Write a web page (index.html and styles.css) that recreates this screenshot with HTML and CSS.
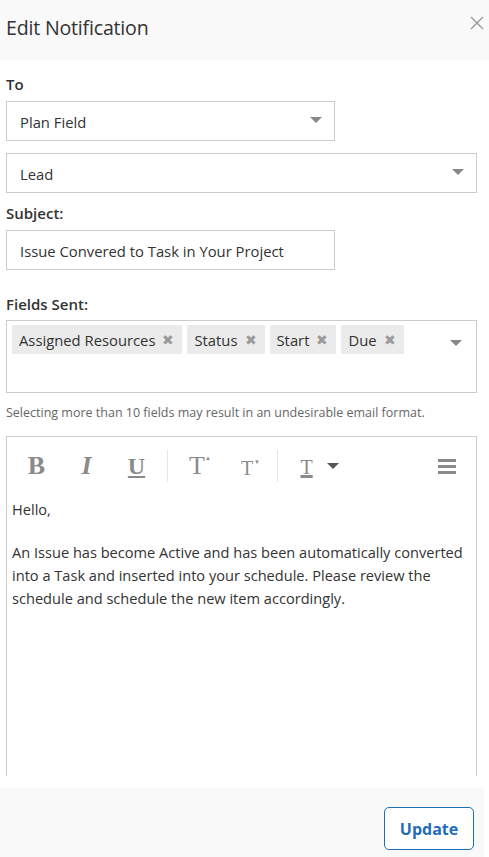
FILE: index.html
```html
<!DOCTYPE html>
<html>
<head>
<meta charset="utf-8">
<link rel="stylesheet" href="styles.css">
</head>
<body>
<div class="dialog">
  <div class="header">
    <h1 class="title">Edit Notification</h1>
    <svg class="close" width="14" height="14" viewBox="0 0 14 14"><path d="M1 1L13 13M13 1L1 13" stroke="#999" stroke-width="1.4" fill="none"/></svg>
  </div>
  <div class="body">
    <div class="label label-to">To</div>
    <div class="select short"><span>Plan Field</span><i class="caret"></i></div>
    <div class="select full"><span>Lead</span><i class="caret"></i></div>
    <div class="label label-subject">Subject:</div>
    <div class="input short">Issue Convered to Task in Your Project</div>
    <div class="label label-fields">Fields Sent:</div>
    <div class="multi">
      <div class="tags">
        <span class="tag">Assigned Resources <b class="x">✖</b></span>
        <span class="tag">Status <b class="x">✖</b></span>
        <span class="tag">Start <b class="x">✖</b></span>
        <span class="tag">Due <b class="x">✖</b></span>
      </div>
      <i class="caret"></i>
    </div>
    <div class="hint">Selecting more than 10 fields may result in an undesirable email format.</div>
    <div class="editor">
      <div class="toolbar">
        <span class="tb tb-b">B</span>
        <span class="tb tb-i">I</span>
        <span class="tb tb-u">U</span>
        <span class="sep"></span>
        <span class="tb tb-t">T<small>&#9650;</small></span>
        <span class="tb tb-t2">T<small>&#9660;</small></span>
        <span class="sep"></span>
        <span class="tb-color">T</span><i class="caret dark"></i>
        <span class="spacer"></span>
        <span class="menu"><i></i><i></i><i></i></span>
      </div>
      <div class="content">
        <p>Hello,</p>
        <p>An Issue has become Active and has been automatically converted into a Task and inserted into your schedule. Please review the schedule and schedule the new item accordingly.</p>
      </div>
    </div>
  </div>
  <div class="footer">
    <button class="btn">Update</button>
  </div>
</div>
</body>
</html>
```
FILE: styles.css
```css
* { box-sizing: border-box; }
html, body { margin: 0; padding: 0; background: #fff; }
body { font-family: "Open Sans", "Noto Sans", sans-serif; color: #333; width: 489px; height: 857px; overflow: hidden; }
.dialog { display: flex; flex-direction: column; height: 857px; }
.header { background: #f9f9f9; height: 60px; display: flex; align-items: flex-start; justify-content: space-between; padding: 0 5px 0 6px; }
.title { margin: 0; font-weight: 400; font-size: 19.6px; line-height: 20px; padding-top: 18px; color: #333; letter-spacing: -0.2px; }
.close { margin-top: 16px; }
.body { flex: 1; padding: 0 12px 0 6px; display: flex; flex-direction: column; }
.label { font-weight: 600; font-size: 15px; color: #333; line-height: 20px; }
.label-to { margin-top: 14px; margin-bottom: 7px; }
.label-subject { margin-top: 10px; margin-bottom: 7px; }
.label-fields { margin-top: 24px; margin-bottom: 6px; }
.select, .input { height: 40px; border: 1px solid #ccc; display: flex; align-items: center; padding: 2px 12px 0 13px; font-size: 14.8px; color: #333; justify-content: space-between; }
.short { width: 329px; }
.full { width: 471px; margin-top: 12px; }
.select .caret { margin-top: -4px; }
.caret { display: inline-block; width: 0; height: 0; border-left: 6px solid transparent; border-right: 6px solid transparent; border-top: 6px solid #888; }
.caret.dark { border-top-color: #555; border-left-width: 6px; border-right-width: 6px; border-top-width: 6px; margin-left: 14px; margin-top: 0; }
.multi { width: 471px; height: 73px; border: 1px solid #ccc; display: flex; align-items: flex-start; justify-content: space-between; padding: 4px 14px 0 5px; }
.multi .caret { margin-top: 15px; }
.tags { display: flex; gap: 5px; }
.tag { background: #ebebeb; height: 29px; display: flex; align-items: center; padding: 1px 8px 0 7px; font-size: 14.8px; color: #333; white-space: nowrap; }
.x { color: #9a9a9a; font-size: 14px; margin-left: 7px; font-weight: 400; line-height: 1; }
.hint { font-size: 12.5px; color: #666; margin-top: 12px; line-height: 16px; }
.editor { margin-top: 15px; border: 1px solid #ccc; border-bottom: none; width: 471px; flex: 1; margin-bottom: 12px; }
.toolbar { display: flex; align-items: center; height: 58px; padding: 0 20px 0 4.5px; }
.tb { font-family: "Liberation Serif", serif; color: #8a8a8a; font-size: 26px; width: 50px; text-align: center; line-height: 1; position: relative; font-weight: 700; }
.tb-i { font-style: italic; }
.tb-u { text-decoration: underline; text-decoration-thickness: 2px; text-underline-offset: 2px; font-size: 24px; }
.tb-t small, .tb-t2 small { font-size: 6px; position: absolute; top: 2px; }
.tb-t small { left: 33px; }
.tb-t2 small { left: 32px; top: 5px; }
.tb-t2 { font-size: 20px; font-weight: 400; padding-top: 4px; }
.tb-t { font-weight: 400; }
.tb-color { font-family: "Liberation Serif", serif; color: #8a8a8a; font-size: 20px; line-height: 1; margin-left: 18px; text-decoration: underline; text-decoration-thickness: 3px; text-underline-offset: 1px; font-weight: 400; padding-top: 2px; }
.sep { width: 1px; height: 32px; background: #e5e5e5; margin: 0 4.5px 0 5px; }
.spacer { flex: 1; }
.menu { display: flex; flex-direction: column; gap: 3px; }
.menu i { display: block; width: 18px; height: 3px; background: #8a8a8a; }
.content { padding: 3px 5px 0; font-size: 14.6px; color: #333; line-height: 23px; }
.content p { margin: 0 0 20px 0; }
.footer { background: #f9f9f9; height: 69px; width: 484px; display: flex; justify-content: flex-end; align-items: flex-start; padding: 19px 10px 0 0; }
.btn { font-family: inherit; background: #fff; border: 1px solid #1f6db8; color: #1f6db8; border-radius: 5px; font-weight: 700; font-size: 16px; height: 43px; width: 90px; padding: 0; }
```
